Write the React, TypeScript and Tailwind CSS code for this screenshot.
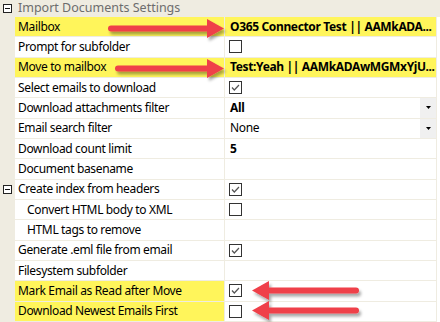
import React from "react";

type Row = {
  label: string;
  value?: string;
  bold?: boolean;
  check?: boolean;
  dropdown?: boolean;
  hlLabel?: boolean;
  hlValue?: boolean;
  indent?: boolean;
  expander?: boolean;
};

const rows: Row[] = [
  { label: "Mailbox", value: "O365 Connector Test || AAMkADA...", bold: true, hlLabel: true, hlValue: true },
  { label: "Prompt for subfolder", check: false },
  { label: "Move to mailbox", value: "Test:Yeah || AAMkADAwMGMxYjU...", bold: true, hlLabel: true, hlValue: true },
  { label: "Select emails to download", check: true },
  { label: "Download attachments filter", value: "All", bold: true, dropdown: true },
  { label: "Email search filter", value: "None", dropdown: true },
  { label: "Download count limit", value: "5", bold: true },
  { label: "Document basename", value: "" },
  { label: "Create index from headers", check: true, expander: true },
  { label: "Convert HTML body to XML", check: false, indent: true },
  { label: "HTML tags to remove", value: "", indent: true },
  { label: "Generate .eml file from email", check: true },
  { label: "Filesystem subfolder", value: "" },
  { label: "Mark Email as Read after Move", check: true, hlLabel: true },
  { label: "Download Newest Emails First", check: false, hlLabel: true },
];

function MinusBox() {
  return (
    <svg width="9" height="9" viewBox="0 0 9 9" className="block">
      <rect x="0.5" y="0.5" width="8" height="8" fill="#fff" stroke="#222" />
      <line x1="2" y1="4.5" x2="7" y2="4.5" stroke="#111" />
    </svg>
  );
}

function CheckBox({ checked }: { checked: boolean }) {
  return (
    <svg width="13" height="13" viewBox="0 0 13 13" className="block">
      <rect x="0.5" y="0.5" width="12" height="12" fill="#fff" stroke="#333" />
      {checked && <path d="M3 6.5 L5.3 9 L10 4" fill="none" stroke="#555" strokeWidth="1.2" />}
    </svg>
  );
}

function Arrow({ dir, y, from, to }: { dir: "r" | "l"; y: number; from: number; to: number }) {
  if (dir === "r") {
    return (
      <g filter="url(#sh)">
        <line x1={from} y1={y} x2={to - 16} y2={y} stroke="#ef3f49" strokeWidth="6" strokeLinecap="round" />
        <polygon points={`${to - 17},${y - 9.5} ${to},${y} ${to - 17},${y + 9.5}`} fill="#ef3f49" />
      </g>
    );
  }
  return (
    <g filter="url(#sh)">
      <line x1={from + 16} y1={y} x2={to} y2={y} stroke="#ef3f49" strokeWidth="6" strokeLinecap="round" />
      <polygon points={`${from + 17},${y - 9.5} ${from},${y} ${from + 17},${y + 9.5}`} fill="#ef3f49" />
    </g>
  );
}

export default function App() {
  return (
    <div className="relative w-[440px] h-[322px] overflow-hidden bg-white text-[12px] tracking-[-0.35px] text-black font-['Noto_Sans','Open_Sans',sans-serif]">
      <div className="flex h-[17px] items-center bg-[#efece1]">
        <div className="w-[15px] flex justify-center">
          <MinusBox />
        </div>
        <div className="pl-[3px] text-[12.5px] tracking-normal text-[#6d6d6d] leading-none">Import Documents Settings</div>
      </div>
      {rows.map((r, i) => (
        <div key={i} className="flex h-[20.33px]">
          <div className="w-[15px] bg-[#efece1] flex items-center justify-center">
            {r.expander && <MinusBox />}
          </div>
          <div
            className={`w-[209px] flex items-center border-b border-[#efece1] ${r.indent ? "pl-[12px]" : "pl-[3px]"} ${r.hlLabel ? "bg-[#fff55b]" : "bg-white"}`}
          >
            <span className="whitespace-nowrap leading-none">{r.label}</span>
          </div>
          <div className="w-[1px] bg-[#efece1]" />
          <div
            className={`flex-1 flex items-center border-b border-r border-[#efece1] ${r.hlValue ? "bg-[#fff55b]" : "bg-white"}`}
          >
            {r.check !== undefined ? (
              <div className="pl-[4px]">
                <CheckBox checked={r.check} />
              </div>
            ) : (
              <span className={`pl-[5px] flex-1 whitespace-nowrap leading-none ${r.bold ? "font-bold" : ""}`}>
                {r.value}
              </span>
            )}
            {r.dropdown && (
              <div className="w-[16px] self-stretch bg-[#f0f0f0] flex items-center justify-center">
                <svg width="5" height="3" viewBox="0 0 5 3" className="block">
                  <polygon points="0,0 5,0 2.5,3" fill="#000" />
                </svg>
              </div>
            )}
          </div>
          <div className="w-[3px] bg-white" />
        </div>
      ))}
      <svg className="absolute inset-0 pointer-events-none" width="440" height="322" viewBox="0 0 440 322">
        <defs>
          <filter id="sh" x="-20%" y="-50%" width="140%" height="200%">
            <feDropShadow dx="2" dy="3" stdDeviation="1.8" floodColor="#000" floodOpacity="0.35" />
          </filter>
        </defs>
        <Arrow dir="r" y={28.5} from={111} to={224} />
        <Arrow dir="r" y={68.5} from={118} to={224} />
        <Arrow dir="l" y={290.5} from={252} to={356} />
        <Arrow dir="l" y={310.5} from={252} to={356} />
      </svg>
    </div>
  );
}
